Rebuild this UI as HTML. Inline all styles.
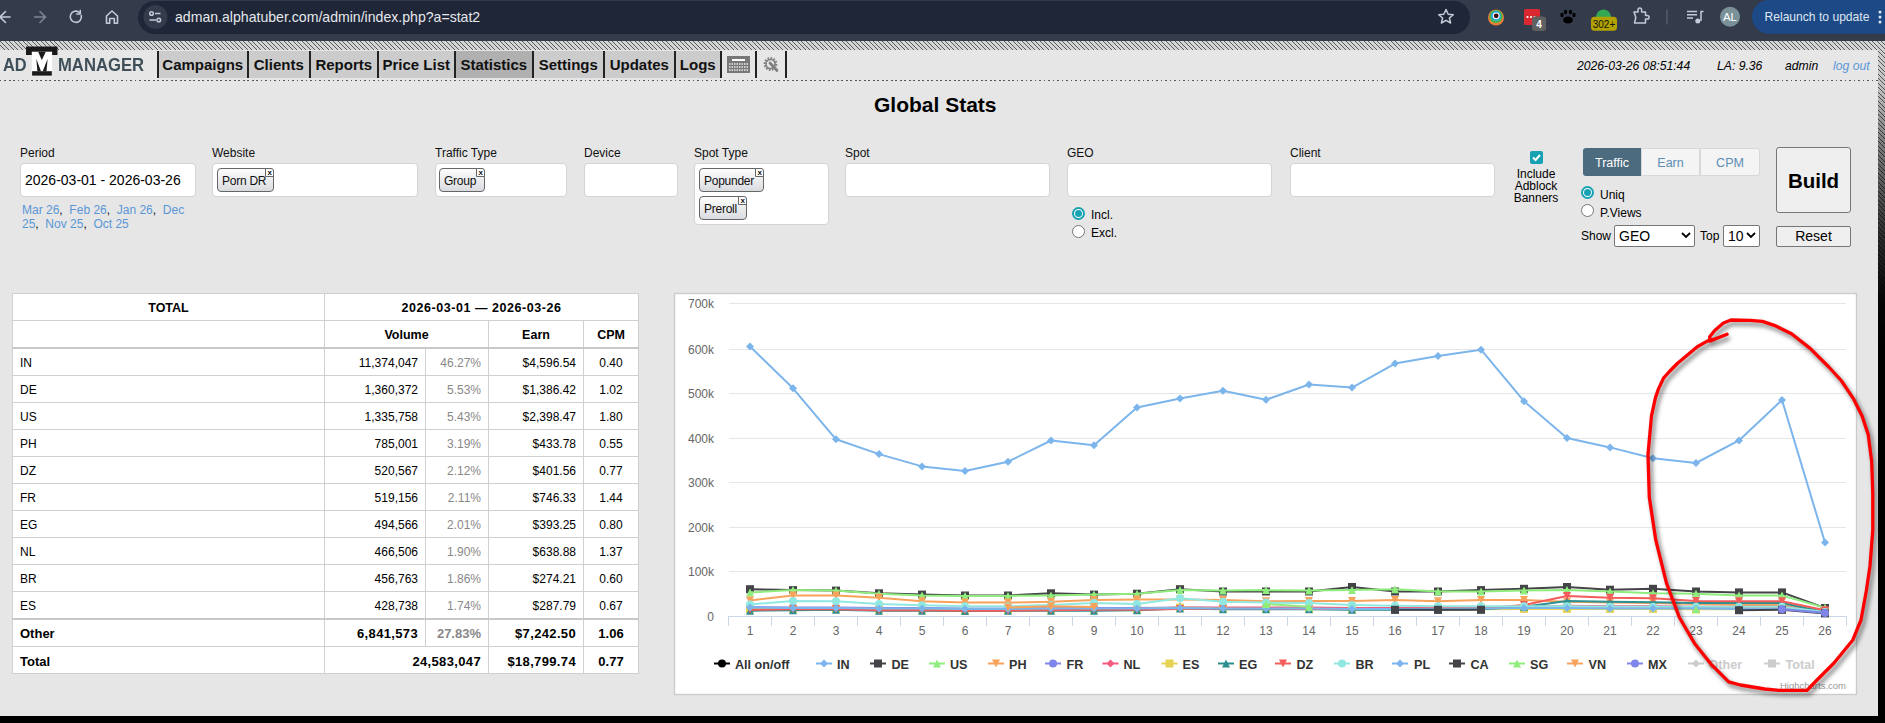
<!DOCTYPE html>
<html><head><meta charset="utf-8">
<style>
*{box-sizing:border-box;margin:0;padding:0}
html,body{width:1885px;height:723px;overflow:hidden;background:#e6e6e6;font-family:"Liberation Sans",sans-serif;color:#000}
.a{position:absolute;white-space:nowrap}
#chrome{position:absolute;left:0;top:0;width:1885px;height:41px;background:#343b4b}
#urlpill{position:absolute;left:138px;top:1px;width:1332px;height:33px;border-radius:17px;background:#1f2638}
#bottom{position:absolute;left:0;top:716px;width:1885px;height:7px;background:#000}
.nav{position:absolute;top:51px;height:27px;background:#cccccc;font-weight:bold;font-size:15px;line-height:27px;text-align:center;color:#111}
.sep{position:absolute;top:51px;width:1.5px;height:27px;background:#222}
#dots{position:absolute;left:0;top:80px;width:1878px;height:1px;background:repeating-linear-gradient(90deg,#555 0 1.5px,transparent 1.5px 4.5px)}
.lbl{position:absolute;font-size:12px;top:146px;color:#111}
.inp{position:absolute;top:163px;height:34px;background:#fff;border:1px solid #d4d4d4;border-radius:4px}
.tag{position:absolute;height:24px;border:1px solid #666;border-radius:4px;background:linear-gradient(#fdfdfd,#d9dcdf);font-size:12px;line-height:24px;padding-left:4px;color:#111;letter-spacing:-0.25px}
.tag i{position:absolute;right:-1px;top:-1px;width:9px;height:9px;border:1px solid #666;border-radius:0 3px 0 0;background:#fff;font-style:normal;font-size:8px;line-height:7px;text-align:center;font-weight:bold}
.link{color:#5a96d6}
.link b{color:#111;font-weight:normal}

#tbl{position:absolute;left:12px;top:293px;border-collapse:collapse;background:#fff;font-size:12px;table-layout:fixed;width:627px}
#tbl th,#tbl td{border:1px solid #d0d0d0;height:27px;padding:2px 7px 0 7px;white-space:nowrap}
#tbl th{font-weight:bold;font-size:12.5px;text-align:center}
#tbl col{}
#tbl .h2 th{border-bottom:2px solid #c8c8c8}
#tbl td.c0{text-align:left}
#tbl td.v,#tbl td.p,#tbl td.e{text-align:right}
#tbl td.p{color:#888}
#tbl td.m{text-align:center}
#tbl tr.b td{font-weight:bold;font-size:13px}
#tbl tr.b td.v,#tbl tr.b td.e{letter-spacing:0.35px}
#tbl tr.oth td{border-top:2px solid #c8c8c8;height:28px}
#tbl tr.first td{height:28px}
</style></head><body>
<div id="chrome">
  <div id="urlpill"></div>
</div>
<!--CHROME-->
<!-- chrome icons -->
<svg class="a" style="left:0;top:0" width="1885" height="41">
 <g stroke="#c5cbd6" stroke-width="1.6" fill="none" stroke-linecap="round" stroke-linejoin="round">
  <path d="M10 17H0.5M5.5 11.5L0 17L5.5 22.5"/>
 </g>
 <g stroke="#7f8697" stroke-width="1.6" fill="none" stroke-linecap="round" stroke-linejoin="round">
  <path d="M34.5 17H45M40 11.5L45.5 17L40 22.5"/>
 </g>
 <g stroke="#c5cbd6" stroke-width="1.6" fill="none" stroke-linecap="round" stroke-linejoin="round">
  <path d="M81.3 15.5A5.6 5.6 0 1 1 79.5 12.5"/>
  <path d="M80.3 10.5V14H76.8"/>
  <path d="M106.5 23.3V16L112 11L117.5 16V23.3H114.3V18.5H109.7V23.3Z"/>
 </g>
 <circle cx="155.5" cy="17" r="12" fill="#343b4b"/>
 <g stroke="#c5cbd6" stroke-width="1.5" fill="none">
  <circle cx="151.5" cy="13.5" r="1.8"/><path d="M155 13.5H160.5"/>
  <circle cx="158.8" cy="20" r="1.8"/><path d="M149.5 20H156"/>
 </g>
 <text x="175" y="22" font-size="14.1" fill="#e6e8ec" font-family="Liberation Sans">adman.alphatuber.com/admin/index.php?a=stat2</text>
 <path d="M1446 9.5L1448.2 14.3L1453.3 14.7L1449.4 18L1450.6 23L1446 20.3L1441.4 23L1442.6 18L1438.7 14.7L1443.8 14.3Z" stroke="#c5cbd6" stroke-width="1.5" fill="none" stroke-linejoin="round"/>
 <!-- colorful circle -->
 <circle cx="1496" cy="17.5" r="8" fill="#f07a3a"/>
 <circle cx="1496" cy="16.5" r="6.6" fill="#4bb543"/>
 <circle cx="1496" cy="16" r="5" fill="#2aa8e0"/>
 <circle cx="1496.2" cy="15.8" r="3.4" fill="#fff"/>
 <circle cx="1496.2" cy="15.8" r="2.4" fill="#3b1212"/>
 <!-- red square with badge -->
 <rect x="1524" y="9" width="16" height="16" rx="1.5" fill="#d9282f"/>
 <circle cx="1527.5" cy="17" r="1.1" fill="#fff"/><circle cx="1531" cy="17" r="1.1" fill="#fff"/><circle cx="1534.5" cy="17" r="1.1" fill="#fff"/>
 <rect x="1532" y="16.5" width="14" height="14.5" rx="3" fill="#5f6062"/>
 <text x="1539" y="28.3" font-size="10" font-weight="bold" fill="#fff" text-anchor="middle" font-family="Liberation Sans">4</text>
 <!-- paw -->
 <g fill="#000">
  <ellipse cx="1568" cy="20" rx="5" ry="3.5"/>
  <ellipse cx="1562" cy="15" rx="1.6" ry="2.2"/>
  <ellipse cx="1565.5" cy="12" rx="1.7" ry="2.3"/>
  <ellipse cx="1570.5" cy="12" rx="1.7" ry="2.3"/>
  <ellipse cx="1574" cy="15" rx="1.6" ry="2.2"/>
 </g>
 <!-- green + badge -->
 <circle cx="1603.5" cy="17" r="7.5" fill="#34a853"/>
 <rect x="1591" y="16.8" width="26" height="14" rx="3.5" fill="#b3a300"/>
 <text x="1604" y="28" font-size="10" fill="#111" text-anchor="middle" font-family="Liberation Sans">302+</text>
 <!-- puzzle -->
 <path d="M1634 12H1638V9.8A1.8 1.8 0 0 1 1641.6 9.8V12H1645.5V15.5H1647.3A1.8 1.8 0 0 1 1647.3 19.1H1645.5V23H1634.5L1635.8 17.5Z" stroke="#c5cbd6" stroke-width="1.5" fill="none" stroke-linejoin="round"/>
 <path d="M1667 9.5V24.5" stroke="#5a6170" stroke-width="1.3"/>
 <!-- media icon -->
 <g stroke="#c5cbd6" stroke-width="1.5" fill="none">
  <path d="M1687 11.5H1697M1687 14.8H1697M1687 18.1H1693"/>
  <path d="M1701 21V11.5H1703.5"/>
 </g>
 <circle cx="1697.8" cy="21" r="2.5" fill="#c5cbd6"/>
 <!-- avatar -->
 <circle cx="1730" cy="16.8" r="10" fill="#7a9198"/>
 <text x="1730" y="21" font-size="11.5" fill="#fff" text-anchor="middle" font-family="Liberation Sans">AL</text>
 <!-- relaunch -->
 <rect x="1752" y="0" width="160" height="33.7" rx="16.8" fill="#1d4a86"/>
 <text x="1764.5" y="21" font-size="12.1" fill="#dfe6f2" font-family="Liberation Sans">Relaunch to update</text>
 <circle cx="1880" cy="12" r="1.5" fill="#dfe6f2"/><circle cx="1880" cy="17" r="1.5" fill="#dfe6f2"/><circle cx="1880" cy="22" r="1.5" fill="#dfe6f2"/>
</svg>
<!-- nav icons -->
<svg class="a" style="left:720px;top:50px" width="70" height="30">
 <rect x="7" y="6" width="23" height="17" fill="#787878"/>
 <rect x="12" y="9" width="13" height="2" fill="#fff"/>
 <g fill="#f0f0f0">
  <rect x="9.5" y="12.5" width="18" height="1.5" opacity="0"/>
 </g>
 <g stroke="#eaeaea" stroke-width="1.3" stroke-dasharray="1.5 1">
  <path d="M9 14H28M9 17H28M9 20H28"/>
 </g>
 <circle cx="50.5" cy="14" r="5.5" stroke="#808080" stroke-width="2.8" fill="none" stroke-dasharray="1.6 1.2"/>
 <circle cx="50.5" cy="14" r="4.5" stroke="#808080" stroke-width="1.6" fill="none"/>
 <path d="M50 13L57 20.5" stroke="#808080" stroke-width="2.8" stroke-linecap="round"/>
</svg>

<!--/CHROME-->
<svg class="a" style="left:0;top:0" width="1885" height="723" shape-rendering="crispEdges">
<defs><pattern id="stp" x="0" y="41" width="9" height="9" patternUnits="userSpaceOnUse"><rect width="9" height="9" fill="#d4d4d4"/><g fill="#5a5a5a"><rect x="0" y="0" width="1" height="1"/><rect x="5" y="0" width="1" height="1"/><rect x="1" y="1" width="1" height="1"/><rect x="6" y="1" width="1" height="1"/><rect x="2" y="2" width="1" height="1"/><rect x="7" y="2" width="1" height="1"/><rect x="3" y="3" width="1" height="1"/><rect x="8" y="3" width="1" height="1"/><rect x="4" y="4" width="1" height="1"/><rect x="0" y="4" width="1" height="1"/><rect x="5" y="5" width="1" height="1"/><rect x="1" y="5" width="1" height="1"/><rect x="6" y="6" width="1" height="1"/><rect x="2" y="6" width="1" height="1"/><rect x="7" y="7" width="1" height="1"/><rect x="3" y="7" width="1" height="1"/><rect x="8" y="8" width="1" height="1"/><rect x="4" y="8" width="1" height="1"/></g></pattern>
<linearGradient id="rg" x1="0" y1="0" x2="0" y2="1"><stop offset="0" stop-color="#000" stop-opacity="0"/><stop offset="0.07" stop-color="#000" stop-opacity="0.1"/><stop offset="0.145" stop-color="#000" stop-opacity="0.4"/><stop offset="0.29" stop-color="#000" stop-opacity="0.8"/><stop offset="0.38" stop-color="#000" stop-opacity="0.97"/><stop offset="0.45" stop-color="#000" stop-opacity="1"/><stop offset="1" stop-color="#000" stop-opacity="1"/></linearGradient></defs>
<rect x="0" y="41" width="1885" height="9" fill="url(#stp)"/>
<rect x="1878" y="41" width="7" height="682" fill="url(#stp)"/>
<rect x="1878" y="41" width="7" height="682" fill="url(#rg)"/>
</svg>

<!-- nav -->
<div class="a" style="left:3px;top:55px;font-size:18px;font-weight:bold;color:#3f4f5a;line-height:20px;transform:scaleX(0.91);transform-origin:0 0">AD</div>
<svg class="a" style="left:26px;top:46px" width="32" height="30">
 <rect x="0" y="0.5" width="31.5" height="8.5" fill="#1a1a1a"/>
 <rect x="5.8" y="5.7" width="20.3" height="19.5" fill="#fff"/>
 <path d="M12.1 5.7H19.8L15.8 14Z" fill="#1a1a1a"/>
 <path d="M10.3 12.8L11.4 25.2H15Z" fill="#1a1a1a"/>
 <path d="M21.6 12.8L20.5 25.2H16.8Z" fill="#1a1a1a"/>
 <rect x="6.1" y="25.2" width="19.7" height="4.4" fill="#1a1a1a"/>
</svg>
<div class="a" style="left:57.5px;top:55px;font-size:18px;font-weight:bold;color:#3f4f5a;line-height:20px;transform:scaleX(0.925);transform-origin:0 0">MANAGER</div>
<div class="sep" style="left:157px"></div>
<div class="nav" style="left:158.5px;width:88.5px">Campaigns</div>
<div class="sep" style="left:247px"></div>
<div class="nav" style="left:248.5px;width:60.5px">Clients</div>
<div class="sep" style="left:309px"></div>
<div class="nav" style="left:310.5px;width:66.5px">Reports</div>
<div class="sep" style="left:377px"></div>
<div class="nav" style="left:378.5px;width:75.5px">Price List</div>
<div class="sep" style="left:454px"></div>
<div class="nav" style="left:455.5px;width:76.5px;background:#b0b0b0">Statistics</div>
<div class="sep" style="left:532px"></div>
<div class="nav" style="left:533.5px;width:69.5px">Settings</div>
<div class="sep" style="left:603px"></div>
<div class="nav" style="left:604.5px;width:69.5px">Updates</div>
<div class="sep" style="left:674px"></div>
<div class="nav" style="left:675.5px;width:44.5px">Logs</div>
<div class="sep" style="left:720px"></div>
<div class="sep" style="left:755px"></div>
<div class="sep" style="left:785px"></div>
<div id="dots"></div>

<div class="a" style="left:1577px;top:59px;font-size:12.2px;font-style:italic">2026-03-26 08:51:44</div>
<div class="a" style="left:1717px;top:59px;font-size:12.2px;font-style:italic">LA: 9.36</div>
<div class="a" style="left:1785px;top:59px;font-size:12.2px;font-style:italic">admin</div>
<div class="a link" style="left:1833px;top:59px;font-size:12.2px;font-style:italic">log out</div>

<!-- title -->
<div class="a" style="left:874px;top:93px;font-size:21px;font-weight:bold">Global Stats</div>

<!-- filters -->
<div class="lbl" style="left:20px">Period</div>
<div class="inp" style="left:20px;width:176px"></div>
<div class="a" style="left:25px;top:172px;font-size:14px">2026-03-01 - 2026-03-26</div>
<div class="a link" style="left:22px;top:203px;font-size:12px;line-height:14px;white-space:normal;width:175px">Mar 26<b>,</b>&nbsp; Feb 26<b>,</b>&nbsp; Jan 26<b>,</b>&nbsp; Dec 25<b>,</b>&nbsp; Nov 25<b>,</b>&nbsp; Oct 25</div>

<div class="lbl" style="left:212px">Website</div>
<div class="inp" style="left:212px;width:206px"></div>
<div class="tag" style="left:217px;top:168px;width:57px">Porn DR<i>x</i></div>

<div class="lbl" style="left:435px">Traffic Type</div>
<div class="inp" style="left:435px;width:132px"></div>
<div class="tag" style="left:439px;top:168px;width:46px">Group<i>x</i></div>

<div class="lbl" style="left:584px">Device</div>
<div class="inp" style="left:584px;width:94px"></div>

<div class="lbl" style="left:694px">Spot Type</div>
<div class="inp" style="left:694px;width:135px;height:62px"></div>
<div class="tag" style="left:699px;top:168px;width:65px">Popunder<i>x</i></div>
<div class="tag" style="left:699px;top:196px;width:48px">Preroll<i>x</i></div>

<div class="lbl" style="left:845px">Spot</div>
<div class="inp" style="left:845px;width:205px"></div>

<div class="lbl" style="left:1067px">GEO</div>
<div class="inp" style="left:1067px;width:205px"></div>

<div class="lbl" style="left:1290px">Client</div>
<div class="inp" style="left:1290px;width:205px"></div>


<!-- right controls -->
<div class="a" style="left:1530px;top:151px;width:13px;height:13px;background:#17a2b3;border-radius:2px"></div>
<svg class="a" style="left:1530px;top:151px" width="13" height="13"><path d="M3 6.5 L5.6 9 L10 4" stroke="#fff" stroke-width="2" fill="none"/></svg>
<div class="a" style="left:1506px;top:168px;width:60px;text-align:center;font-size:12px;line-height:12px;white-space:normal">Include<br>Adblock<br>Banners</div>

<div class="a" style="left:1583px;top:148px;width:58px;height:28px;background:#4d6b7e;border-radius:3px 0 0 3px;color:#fff;font-size:12.5px;line-height:30px;text-align:center">Traffic</div>
<div class="a" style="left:1641px;top:148px;width:59px;height:28px;background:#f4f4f4;border:1px solid #d8d8d8;color:#5b8db5;font-size:12.5px;line-height:28px;text-align:center">Earn</div>
<div class="a" style="left:1700px;top:148px;width:60px;height:28px;background:#f4f4f4;border:1px solid #d8d8d8;border-radius:0 3px 3px 0;color:#5b8db5;font-size:12.5px;line-height:28px;text-align:center">CPM</div>

<div class="a" style="left:1581px;top:186px;width:13px;height:13px;border-radius:50%;border:2px solid #17a2b3;background:#fff"></div>
<div class="a" style="left:1584px;top:189px;width:7px;height:7px;border-radius:50%;background:#17a2b3"></div>
<div class="a" style="left:1600px;top:188px;font-size:12px">Uniq</div>
<div class="a" style="left:1581px;top:204px;width:13px;height:13px;border-radius:50%;border:1px solid #777;background:#fff"></div>
<div class="a" style="left:1600px;top:206px;font-size:12px">P.Views</div>

<div class="a" style="left:1581px;top:229px;font-size:12px">Show</div>
<div class="a" style="left:1614px;top:225px;width:81px;height:22px;background:#fff;border:1px solid #767676;border-radius:2px;font-size:14px;line-height:20px;padding-left:4px">GEO</div>
<svg class="a" style="left:1681px;top:231px" width="10" height="8"><path d="M1 2 L5 6 L9 2" stroke="#000" stroke-width="1.8" fill="none"/></svg>
<div class="a" style="left:1700px;top:229px;font-size:12px">Top</div>
<div class="a" style="left:1723px;top:225px;width:37px;height:22px;background:#fff;border:1px solid #767676;border-radius:2px;font-size:14px;line-height:20px;padding-left:4px">10</div>
<svg class="a" style="left:1746px;top:231px" width="10" height="8"><path d="M1 2 L5 6 L9 2" stroke="#000" stroke-width="1.8" fill="none"/></svg>

<div class="a" style="left:1776px;top:147px;width:75px;height:66px;background:#efefef;border:1px solid #767676;border-radius:3px;font-size:20.5px;font-weight:bold;line-height:65px;text-align:center">Build</div>
<div class="a" style="left:1776px;top:226px;width:75px;height:21px;background:#efefef;border:1px solid #767676;border-radius:2px;font-size:14px;line-height:19px;text-align:center">Reset</div>

<div class="a" style="left:1072px;top:207px;width:13px;height:13px;border-radius:50%;border:2px solid #17a2b3;background:#fff"></div>
<div class="a" style="left:1075px;top:210px;width:7px;height:7px;border-radius:50%;background:#17a2b3"></div>
<div class="a" style="left:1091px;top:208px;font-size:12px">Incl.</div>
<div class="a" style="left:1072px;top:225px;width:13px;height:13px;border-radius:50%;border:1px solid #777;background:#fff"></div>
<div class="a" style="left:1091px;top:226px;font-size:12px">Excl.</div>

<!-- table -->
<table id="tbl"><colgroup><col style="width:312px"><col style="width:101px"><col style="width:63px"><col style="width:95px"><col style="width:55px"></colgroup>
<tr class="h1"><th class="c0" rowspan="1">TOTAL</th><th colspan="4" style="letter-spacing:0.55px;padding-top:1px">2026-03-01 &mdash; 2026-03-26</th></tr>
<tr class="h2"><th class="c0"></th><th colspan="2">Volume</th><th>Earn</th><th>CPM</th></tr>
<tr class="d first"><td class="c0">IN</td><td class="v">11,374,047</td><td class="p">46.27%</td><td class="e">$4,596.54</td><td class="m">0.40</td></tr>
<tr class="d"><td class="c0">DE</td><td class="v">1,360,372</td><td class="p">5.53%</td><td class="e">$1,386.42</td><td class="m">1.02</td></tr>
<tr class="d"><td class="c0">US</td><td class="v">1,335,758</td><td class="p">5.43%</td><td class="e">$2,398.47</td><td class="m">1.80</td></tr>
<tr class="d"><td class="c0">PH</td><td class="v">785,001</td><td class="p">3.19%</td><td class="e">$433.78</td><td class="m">0.55</td></tr>
<tr class="d"><td class="c0">DZ</td><td class="v">520,567</td><td class="p">2.12%</td><td class="e">$401.56</td><td class="m">0.77</td></tr>
<tr class="d"><td class="c0">FR</td><td class="v">519,156</td><td class="p">2.11%</td><td class="e">$746.33</td><td class="m">1.44</td></tr>
<tr class="d"><td class="c0">EG</td><td class="v">494,566</td><td class="p">2.01%</td><td class="e">$393.25</td><td class="m">0.80</td></tr>
<tr class="d"><td class="c0">NL</td><td class="v">466,506</td><td class="p">1.90%</td><td class="e">$638.88</td><td class="m">1.37</td></tr>
<tr class="d"><td class="c0">BR</td><td class="v">456,763</td><td class="p">1.86%</td><td class="e">$274.21</td><td class="m">0.60</td></tr>
<tr class="d"><td class="c0">ES</td><td class="v">428,738</td><td class="p">1.74%</td><td class="e">$287.79</td><td class="m">0.67</td></tr>
<tr class="d b oth"><td class="c0">Other</td><td class="v">6,841,573</td><td class="p">27.83%</td><td class="e">$7,242.50</td><td class="m">1.06</td></tr>
<tr class="d b"><td class="c0">Total</td><td class="v" colspan="2">24,583,047</td><td class="e">$18,799.74</td><td class="m">0.77</td></tr>

</table>
<!--CHART-->
<svg class="a" style="left:0;top:0" width="1885" height="723">
<rect x="674.5" y="293.5" width="1182" height="401" fill="#fff" stroke="#cbcbcb" stroke-width="1.4"/>
<path d="M729 571.5H1846" stroke="#e6e6e6" stroke-width="1"/>
<path d="M729 527.5H1846" stroke="#e6e6e6" stroke-width="1"/>
<path d="M729 482.5H1846" stroke="#e6e6e6" stroke-width="1"/>
<path d="M729 438.5H1846" stroke="#e6e6e6" stroke-width="1"/>
<path d="M729 393.5H1846" stroke="#e6e6e6" stroke-width="1"/>
<path d="M729 349.5H1846" stroke="#e6e6e6" stroke-width="1"/>
<path d="M729 303.5H1846" stroke="#e6e6e6" stroke-width="1"/>
<text x="714" y="621" text-anchor="end" font-size="12" fill="#666">0</text>
<text x="714" y="576" text-anchor="end" font-size="12" fill="#666">100k</text>
<text x="714" y="532" text-anchor="end" font-size="12" fill="#666">200k</text>
<text x="714" y="487" text-anchor="end" font-size="12" fill="#666">300k</text>
<text x="714" y="443" text-anchor="end" font-size="12" fill="#666">400k</text>
<text x="714" y="398" text-anchor="end" font-size="12" fill="#666">500k</text>
<text x="714" y="354" text-anchor="end" font-size="12" fill="#666">600k</text>
<text x="714" y="308" text-anchor="end" font-size="12" fill="#666">700k</text>
<path d="M728 616.5H1847" stroke="#ccd6eb" stroke-width="1"/>
<path d="M728.5 616.5V626" stroke="#ccd6eb" stroke-width="1"/>
<path d="M771.5 616.5V626" stroke="#ccd6eb" stroke-width="1"/>
<path d="M814.5 616.5V626" stroke="#ccd6eb" stroke-width="1"/>
<path d="M857.5 616.5V626" stroke="#ccd6eb" stroke-width="1"/>
<path d="M900.5 616.5V626" stroke="#ccd6eb" stroke-width="1"/>
<path d="M943.5 616.5V626" stroke="#ccd6eb" stroke-width="1"/>
<path d="M986.5 616.5V626" stroke="#ccd6eb" stroke-width="1"/>
<path d="M1029.5 616.5V626" stroke="#ccd6eb" stroke-width="1"/>
<path d="M1072.5 616.5V626" stroke="#ccd6eb" stroke-width="1"/>
<path d="M1115.5 616.5V626" stroke="#ccd6eb" stroke-width="1"/>
<path d="M1158.5 616.5V626" stroke="#ccd6eb" stroke-width="1"/>
<path d="M1201.5 616.5V626" stroke="#ccd6eb" stroke-width="1"/>
<path d="M1244.5 616.5V626" stroke="#ccd6eb" stroke-width="1"/>
<path d="M1287.5 616.5V626" stroke="#ccd6eb" stroke-width="1"/>
<path d="M1330.5 616.5V626" stroke="#ccd6eb" stroke-width="1"/>
<path d="M1373.5 616.5V626" stroke="#ccd6eb" stroke-width="1"/>
<path d="M1416.5 616.5V626" stroke="#ccd6eb" stroke-width="1"/>
<path d="M1459.5 616.5V626" stroke="#ccd6eb" stroke-width="1"/>
<path d="M1502.5 616.5V626" stroke="#ccd6eb" stroke-width="1"/>
<path d="M1545.5 616.5V626" stroke="#ccd6eb" stroke-width="1"/>
<path d="M1588.5 616.5V626" stroke="#ccd6eb" stroke-width="1"/>
<path d="M1631.5 616.5V626" stroke="#ccd6eb" stroke-width="1"/>
<path d="M1674.5 616.5V626" stroke="#ccd6eb" stroke-width="1"/>
<path d="M1717.5 616.5V626" stroke="#ccd6eb" stroke-width="1"/>
<path d="M1760.5 616.5V626" stroke="#ccd6eb" stroke-width="1"/>
<path d="M1803.5 616.5V626" stroke="#ccd6eb" stroke-width="1"/>
<path d="M1846.5 616.5V626" stroke="#ccd6eb" stroke-width="1"/>
<text x="750" y="634.7" text-anchor="middle" font-size="12" fill="#666">1</text>
<text x="793" y="634.7" text-anchor="middle" font-size="12" fill="#666">2</text>
<text x="836" y="634.7" text-anchor="middle" font-size="12" fill="#666">3</text>
<text x="879" y="634.7" text-anchor="middle" font-size="12" fill="#666">4</text>
<text x="922" y="634.7" text-anchor="middle" font-size="12" fill="#666">5</text>
<text x="965" y="634.7" text-anchor="middle" font-size="12" fill="#666">6</text>
<text x="1008" y="634.7" text-anchor="middle" font-size="12" fill="#666">7</text>
<text x="1051" y="634.7" text-anchor="middle" font-size="12" fill="#666">8</text>
<text x="1094" y="634.7" text-anchor="middle" font-size="12" fill="#666">9</text>
<text x="1137" y="634.7" text-anchor="middle" font-size="12" fill="#666">10</text>
<text x="1180" y="634.7" text-anchor="middle" font-size="12" fill="#666">11</text>
<text x="1223" y="634.7" text-anchor="middle" font-size="12" fill="#666">12</text>
<text x="1266" y="634.7" text-anchor="middle" font-size="12" fill="#666">13</text>
<text x="1309" y="634.7" text-anchor="middle" font-size="12" fill="#666">14</text>
<text x="1352" y="634.7" text-anchor="middle" font-size="12" fill="#666">15</text>
<text x="1395" y="634.7" text-anchor="middle" font-size="12" fill="#666">16</text>
<text x="1438" y="634.7" text-anchor="middle" font-size="12" fill="#666">17</text>
<text x="1481" y="634.7" text-anchor="middle" font-size="12" fill="#666">18</text>
<text x="1524" y="634.7" text-anchor="middle" font-size="12" fill="#666">19</text>
<text x="1567" y="634.7" text-anchor="middle" font-size="12" fill="#666">20</text>
<text x="1610" y="634.7" text-anchor="middle" font-size="12" fill="#666">21</text>
<text x="1653" y="634.7" text-anchor="middle" font-size="12" fill="#666">22</text>
<text x="1696" y="634.7" text-anchor="middle" font-size="12" fill="#666">23</text>
<text x="1739" y="634.7" text-anchor="middle" font-size="12" fill="#666">24</text>
<text x="1782" y="634.7" text-anchor="middle" font-size="12" fill="#666">25</text>
<text x="1825" y="634.7" text-anchor="middle" font-size="12" fill="#666">26</text>
<path d="M750 346.5 L793 388.3 L836 439.3 L879 454.1 L922 466.4 L965 471.1 L1008 461.7 L1051 440.5 L1094 445.2 L1137 407.6 L1180 398.4 L1223 390.7 L1266 399.8 L1309 384.5 L1352 387.6 L1395 363.6 L1438 356.1 L1481 349.7 L1524 401.2 L1567 438.1 L1610 447.4 L1653 458.2 L1696 463 L1739 440.4 L1782 400 L1825 542.5" stroke="#7cb5ec" stroke-width="2" fill="none" stroke-linejoin="round" stroke-linecap="round"/>
<path d="M750 342.5L754 346.5L750 350.5L746 346.5Z" fill="#7cb5ec"/>
<path d="M793 384.3L797 388.3L793 392.3L789 388.3Z" fill="#7cb5ec"/>
<path d="M836 435.3L840 439.3L836 443.3L832 439.3Z" fill="#7cb5ec"/>
<path d="M879 450.1L883 454.1L879 458.1L875 454.1Z" fill="#7cb5ec"/>
<path d="M922 462.4L926 466.4L922 470.4L918 466.4Z" fill="#7cb5ec"/>
<path d="M965 467.1L969 471.1L965 475.1L961 471.1Z" fill="#7cb5ec"/>
<path d="M1008 457.7L1012 461.7L1008 465.7L1004 461.7Z" fill="#7cb5ec"/>
<path d="M1051 436.5L1055 440.5L1051 444.5L1047 440.5Z" fill="#7cb5ec"/>
<path d="M1094 441.2L1098 445.2L1094 449.2L1090 445.2Z" fill="#7cb5ec"/>
<path d="M1137 403.6L1141 407.6L1137 411.6L1133 407.6Z" fill="#7cb5ec"/>
<path d="M1180 394.4L1184 398.4L1180 402.4L1176 398.4Z" fill="#7cb5ec"/>
<path d="M1223 386.7L1227 390.7L1223 394.7L1219 390.7Z" fill="#7cb5ec"/>
<path d="M1266 395.8L1270 399.8L1266 403.8L1262 399.8Z" fill="#7cb5ec"/>
<path d="M1309 380.5L1313 384.5L1309 388.5L1305 384.5Z" fill="#7cb5ec"/>
<path d="M1352 383.6L1356 387.6L1352 391.6L1348 387.6Z" fill="#7cb5ec"/>
<path d="M1395 359.6L1399 363.6L1395 367.6L1391 363.6Z" fill="#7cb5ec"/>
<path d="M1438 352.1L1442 356.1L1438 360.1L1434 356.1Z" fill="#7cb5ec"/>
<path d="M1481 345.7L1485 349.7L1481 353.7L1477 349.7Z" fill="#7cb5ec"/>
<path d="M1524 397.2L1528 401.2L1524 405.2L1520 401.2Z" fill="#7cb5ec"/>
<path d="M1567 434.1L1571 438.1L1567 442.1L1563 438.1Z" fill="#7cb5ec"/>
<path d="M1610 443.4L1614 447.4L1610 451.4L1606 447.4Z" fill="#7cb5ec"/>
<path d="M1653 454.2L1657 458.2L1653 462.2L1649 458.2Z" fill="#7cb5ec"/>
<path d="M1696 459L1700 463L1696 467L1692 463Z" fill="#7cb5ec"/>
<path d="M1739 436.4L1743 440.4L1739 444.4L1735 440.4Z" fill="#7cb5ec"/>
<path d="M1782 396L1786 400L1782 404L1778 400Z" fill="#7cb5ec"/>
<path d="M1825 538.5L1829 542.5L1825 546.5L1821 542.5Z" fill="#7cb5ec"/>
<path d="M750 589.2 L793 590.1 L836 590.6 L879 593.3 L922 594.6 L965 595.5 L1008 595.5 L1051 593.3 L1094 594.6 L1137 593.7 L1180 589.2 L1223 591.5 L1266 591.5 L1309 591.5 L1352 587 L1395 591.5 L1438 591.5 L1481 590.1 L1524 588.8 L1567 587 L1610 589.7 L1653 588.8 L1696 591.5 L1739 592.4 L1782 592.4 L1825 608" stroke="#434348" stroke-width="2" fill="none" stroke-linejoin="round" stroke-linecap="round"/>
<rect x="746" y="585.2" width="8" height="8" fill="#434348"/>
<rect x="789" y="586.1" width="8" height="8" fill="#434348"/>
<rect x="832" y="586.6" width="8" height="8" fill="#434348"/>
<rect x="875" y="589.3" width="8" height="8" fill="#434348"/>
<rect x="918" y="590.6" width="8" height="8" fill="#434348"/>
<rect x="961" y="591.5" width="8" height="8" fill="#434348"/>
<rect x="1004" y="591.5" width="8" height="8" fill="#434348"/>
<rect x="1047" y="589.3" width="8" height="8" fill="#434348"/>
<rect x="1090" y="590.6" width="8" height="8" fill="#434348"/>
<rect x="1133" y="589.7" width="8" height="8" fill="#434348"/>
<rect x="1176" y="585.2" width="8" height="8" fill="#434348"/>
<rect x="1219" y="587.5" width="8" height="8" fill="#434348"/>
<rect x="1262" y="587.5" width="8" height="8" fill="#434348"/>
<rect x="1305" y="587.5" width="8" height="8" fill="#434348"/>
<rect x="1348" y="583" width="8" height="8" fill="#434348"/>
<rect x="1391" y="587.5" width="8" height="8" fill="#434348"/>
<rect x="1434" y="587.5" width="8" height="8" fill="#434348"/>
<rect x="1477" y="586.1" width="8" height="8" fill="#434348"/>
<rect x="1520" y="584.8" width="8" height="8" fill="#434348"/>
<rect x="1563" y="583" width="8" height="8" fill="#434348"/>
<rect x="1606" y="585.7" width="8" height="8" fill="#434348"/>
<rect x="1649" y="584.8" width="8" height="8" fill="#434348"/>
<rect x="1692" y="587.5" width="8" height="8" fill="#434348"/>
<rect x="1735" y="588.4" width="8" height="8" fill="#434348"/>
<rect x="1778" y="588.4" width="8" height="8" fill="#434348"/>
<rect x="1821" y="604" width="8" height="8" fill="#434348"/>
<path d="M750 592.4 L793 590.1 L836 590.6 L879 593.7 L922 595.5 L965 595.9 L1008 595.9 L1051 595.5 L1094 594.6 L1137 593.7 L1180 590.1 L1223 590.6 L1266 590.1 L1309 590.6 L1352 590.1 L1395 589.2 L1438 591.5 L1481 591.5 L1524 590.6 L1567 590.1 L1610 591.5 L1653 593.3 L1696 593.7 L1739 595.5 L1782 595.5 L1825 607.6" stroke="#90ed7d" stroke-width="2" fill="none" stroke-linejoin="round" stroke-linecap="round"/>
<path d="M750 588.4L754 596.4L746 596.4Z" fill="#90ed7d"/>
<path d="M793 586.1L797 594.1L789 594.1Z" fill="#90ed7d"/>
<path d="M836 586.6L840 594.6L832 594.6Z" fill="#90ed7d"/>
<path d="M879 589.7L883 597.7L875 597.7Z" fill="#90ed7d"/>
<path d="M922 591.5L926 599.5L918 599.5Z" fill="#90ed7d"/>
<path d="M965 591.9L969 599.9L961 599.9Z" fill="#90ed7d"/>
<path d="M1008 591.9L1012 599.9L1004 599.9Z" fill="#90ed7d"/>
<path d="M1051 591.5L1055 599.5L1047 599.5Z" fill="#90ed7d"/>
<path d="M1094 590.6L1098 598.6L1090 598.6Z" fill="#90ed7d"/>
<path d="M1137 589.7L1141 597.7L1133 597.7Z" fill="#90ed7d"/>
<path d="M1180 586.1L1184 594.1L1176 594.1Z" fill="#90ed7d"/>
<path d="M1223 586.6L1227 594.6L1219 594.6Z" fill="#90ed7d"/>
<path d="M1266 586.1L1270 594.1L1262 594.1Z" fill="#90ed7d"/>
<path d="M1309 586.6L1313 594.6L1305 594.6Z" fill="#90ed7d"/>
<path d="M1352 586.1L1356 594.1L1348 594.1Z" fill="#90ed7d"/>
<path d="M1395 585.2L1399 593.2L1391 593.2Z" fill="#90ed7d"/>
<path d="M1438 587.5L1442 595.5L1434 595.5Z" fill="#90ed7d"/>
<path d="M1481 587.5L1485 595.5L1477 595.5Z" fill="#90ed7d"/>
<path d="M1524 586.6L1528 594.6L1520 594.6Z" fill="#90ed7d"/>
<path d="M1567 586.1L1571 594.1L1563 594.1Z" fill="#90ed7d"/>
<path d="M1610 587.5L1614 595.5L1606 595.5Z" fill="#90ed7d"/>
<path d="M1653 589.3L1657 597.3L1649 597.3Z" fill="#90ed7d"/>
<path d="M1696 589.7L1700 597.7L1692 597.7Z" fill="#90ed7d"/>
<path d="M1739 591.5L1743 599.5L1735 599.5Z" fill="#90ed7d"/>
<path d="M1782 591.5L1786 599.5L1778 599.5Z" fill="#90ed7d"/>
<path d="M1825 603.6L1829 611.6L1821 611.6Z" fill="#90ed7d"/>
<path d="M750 600.4 L793 595.5 L836 595.5 L879 597.7 L922 601.3 L965 602.6 L1008 602.6 L1051 601.7 L1094 600 L1137 599.5 L1180 599.5 L1223 600 L1266 601.3 L1309 600.9 L1352 600.9 L1395 600 L1438 601.3 L1481 600 L1524 600 L1567 601.7 L1610 602.6 L1653 603.1 L1696 604 L1739 604.9 L1782 604.9 L1825 611.1" stroke="#f7a35c" stroke-width="2" fill="none" stroke-linejoin="round" stroke-linecap="round"/>
<path d="M746 596.4L754 596.4L750 604.4Z" fill="#f7a35c"/>
<path d="M789 591.5L797 591.5L793 599.5Z" fill="#f7a35c"/>
<path d="M832 591.5L840 591.5L836 599.5Z" fill="#f7a35c"/>
<path d="M875 593.7L883 593.7L879 601.7Z" fill="#f7a35c"/>
<path d="M918 597.3L926 597.3L922 605.3Z" fill="#f7a35c"/>
<path d="M961 598.6L969 598.6L965 606.6Z" fill="#f7a35c"/>
<path d="M1004 598.6L1012 598.6L1008 606.6Z" fill="#f7a35c"/>
<path d="M1047 597.7L1055 597.7L1051 605.7Z" fill="#f7a35c"/>
<path d="M1090 596L1098 596L1094 604Z" fill="#f7a35c"/>
<path d="M1133 595.5L1141 595.5L1137 603.5Z" fill="#f7a35c"/>
<path d="M1176 595.5L1184 595.5L1180 603.5Z" fill="#f7a35c"/>
<path d="M1219 596L1227 596L1223 604Z" fill="#f7a35c"/>
<path d="M1262 597.3L1270 597.3L1266 605.3Z" fill="#f7a35c"/>
<path d="M1305 596.9L1313 596.9L1309 604.9Z" fill="#f7a35c"/>
<path d="M1348 596.9L1356 596.9L1352 604.9Z" fill="#f7a35c"/>
<path d="M1391 596L1399 596L1395 604Z" fill="#f7a35c"/>
<path d="M1434 597.3L1442 597.3L1438 605.3Z" fill="#f7a35c"/>
<path d="M1477 596L1485 596L1481 604Z" fill="#f7a35c"/>
<path d="M1520 596L1528 596L1524 604Z" fill="#f7a35c"/>
<path d="M1563 597.7L1571 597.7L1567 605.7Z" fill="#f7a35c"/>
<path d="M1606 598.6L1614 598.6L1610 606.6Z" fill="#f7a35c"/>
<path d="M1649 599.1L1657 599.1L1653 607.1Z" fill="#f7a35c"/>
<path d="M1692 600L1700 600L1696 608Z" fill="#f7a35c"/>
<path d="M1735 600.9L1743 600.9L1739 608.9Z" fill="#f7a35c"/>
<path d="M1778 600.9L1786 600.9L1782 608.9Z" fill="#f7a35c"/>
<path d="M1821 607.1L1829 607.1L1825 615.1Z" fill="#f7a35c"/>
<path d="M750 607.1 L793 607.6 L836 607.6 L879 608 L922 608 L965 608.5 L1008 608.5 L1051 608 L1094 608 L1137 608 L1180 607.6 L1223 608 L1266 608 L1309 608 L1352 608.5 L1395 608.5 L1438 608.5 L1481 608 L1524 607.1 L1567 606.2 L1610 606.7 L1653 606.7 L1696 607.1 L1739 607.1 L1782 607.1 L1825 612.9" stroke="#8085e9" stroke-width="2" fill="none" stroke-linejoin="round" stroke-linecap="round"/>
<circle cx="750" cy="607.1" r="4" fill="#8085e9"/>
<circle cx="793" cy="607.6" r="4" fill="#8085e9"/>
<circle cx="836" cy="607.6" r="4" fill="#8085e9"/>
<circle cx="879" cy="608" r="4" fill="#8085e9"/>
<circle cx="922" cy="608" r="4" fill="#8085e9"/>
<circle cx="965" cy="608.5" r="4" fill="#8085e9"/>
<circle cx="1008" cy="608.5" r="4" fill="#8085e9"/>
<circle cx="1051" cy="608" r="4" fill="#8085e9"/>
<circle cx="1094" cy="608" r="4" fill="#8085e9"/>
<circle cx="1137" cy="608" r="4" fill="#8085e9"/>
<circle cx="1180" cy="607.6" r="4" fill="#8085e9"/>
<circle cx="1223" cy="608" r="4" fill="#8085e9"/>
<circle cx="1266" cy="608" r="4" fill="#8085e9"/>
<circle cx="1309" cy="608" r="4" fill="#8085e9"/>
<circle cx="1352" cy="608.5" r="4" fill="#8085e9"/>
<circle cx="1395" cy="608.5" r="4" fill="#8085e9"/>
<circle cx="1438" cy="608.5" r="4" fill="#8085e9"/>
<circle cx="1481" cy="608" r="4" fill="#8085e9"/>
<circle cx="1524" cy="607.1" r="4" fill="#8085e9"/>
<circle cx="1567" cy="606.2" r="4" fill="#8085e9"/>
<circle cx="1610" cy="606.7" r="4" fill="#8085e9"/>
<circle cx="1653" cy="606.7" r="4" fill="#8085e9"/>
<circle cx="1696" cy="607.1" r="4" fill="#8085e9"/>
<circle cx="1739" cy="607.1" r="4" fill="#8085e9"/>
<circle cx="1782" cy="607.1" r="4" fill="#8085e9"/>
<circle cx="1825" cy="612.9" r="4" fill="#8085e9"/>
<path d="M750 608.5 L793 608.5 L836 608.5 L879 608.9 L922 608.9 L965 609.3 L1008 609.3 L1051 608.9 L1094 608.9 L1137 608.9 L1180 607.6 L1223 607.6 L1266 607.6 L1309 607.6 L1352 608 L1395 608 L1438 608 L1481 608 L1524 607.1 L1567 605.8 L1610 606.2 L1653 606.2 L1696 606.7 L1739 606.7 L1782 606.7 L1825 611.6" stroke="#f15c80" stroke-width="2" fill="none" stroke-linejoin="round" stroke-linecap="round"/>
<path d="M750 604.5L754 608.5L750 612.5L746 608.5Z" fill="#f15c80"/>
<path d="M793 604.5L797 608.5L793 612.5L789 608.5Z" fill="#f15c80"/>
<path d="M836 604.5L840 608.5L836 612.5L832 608.5Z" fill="#f15c80"/>
<path d="M879 604.9L883 608.9L879 612.9L875 608.9Z" fill="#f15c80"/>
<path d="M922 604.9L926 608.9L922 612.9L918 608.9Z" fill="#f15c80"/>
<path d="M965 605.3L969 609.3L965 613.3L961 609.3Z" fill="#f15c80"/>
<path d="M1008 605.3L1012 609.3L1008 613.3L1004 609.3Z" fill="#f15c80"/>
<path d="M1051 604.9L1055 608.9L1051 612.9L1047 608.9Z" fill="#f15c80"/>
<path d="M1094 604.9L1098 608.9L1094 612.9L1090 608.9Z" fill="#f15c80"/>
<path d="M1137 604.9L1141 608.9L1137 612.9L1133 608.9Z" fill="#f15c80"/>
<path d="M1180 603.6L1184 607.6L1180 611.6L1176 607.6Z" fill="#f15c80"/>
<path d="M1223 603.6L1227 607.6L1223 611.6L1219 607.6Z" fill="#f15c80"/>
<path d="M1266 603.6L1270 607.6L1266 611.6L1262 607.6Z" fill="#f15c80"/>
<path d="M1309 603.6L1313 607.6L1309 611.6L1305 607.6Z" fill="#f15c80"/>
<path d="M1352 604L1356 608L1352 612L1348 608Z" fill="#f15c80"/>
<path d="M1395 604L1399 608L1395 612L1391 608Z" fill="#f15c80"/>
<path d="M1438 604L1442 608L1438 612L1434 608Z" fill="#f15c80"/>
<path d="M1481 604L1485 608L1481 612L1477 608Z" fill="#f15c80"/>
<path d="M1524 603.1L1528 607.1L1524 611.1L1520 607.1Z" fill="#f15c80"/>
<path d="M1567 601.8L1571 605.8L1567 609.8L1563 605.8Z" fill="#f15c80"/>
<path d="M1610 602.2L1614 606.2L1610 610.2L1606 606.2Z" fill="#f15c80"/>
<path d="M1653 602.2L1657 606.2L1653 610.2L1649 606.2Z" fill="#f15c80"/>
<path d="M1696 602.7L1700 606.7L1696 610.7L1692 606.7Z" fill="#f15c80"/>
<path d="M1739 602.7L1743 606.7L1739 610.7L1735 606.7Z" fill="#f15c80"/>
<path d="M1782 602.7L1786 606.7L1782 610.7L1778 606.7Z" fill="#f15c80"/>
<path d="M1825 607.6L1829 611.6L1825 615.6L1821 611.6Z" fill="#f15c80"/>
<path d="M750 608.9 L793 608.9 L836 608.9 L879 609.3 L922 609.3 L965 609.8 L1008 609.8 L1051 609.3 L1094 609.3 L1137 609.3 L1180 607.6 L1223 608.5 L1266 608.9 L1309 608.9 L1352 609.3 L1395 609.3 L1438 609.3 L1481 609.3 L1524 608.9 L1567 608.9 L1610 608.9 L1653 608.9 L1696 609.3 L1739 609.3 L1782 609.3 L1825 612.5" stroke="#e4d354" stroke-width="2" fill="none" stroke-linejoin="round" stroke-linecap="round"/>
<rect x="746" y="604.9" width="8" height="8" fill="#e4d354"/>
<rect x="789" y="604.9" width="8" height="8" fill="#e4d354"/>
<rect x="832" y="604.9" width="8" height="8" fill="#e4d354"/>
<rect x="875" y="605.3" width="8" height="8" fill="#e4d354"/>
<rect x="918" y="605.3" width="8" height="8" fill="#e4d354"/>
<rect x="961" y="605.8" width="8" height="8" fill="#e4d354"/>
<rect x="1004" y="605.8" width="8" height="8" fill="#e4d354"/>
<rect x="1047" y="605.3" width="8" height="8" fill="#e4d354"/>
<rect x="1090" y="605.3" width="8" height="8" fill="#e4d354"/>
<rect x="1133" y="605.3" width="8" height="8" fill="#e4d354"/>
<rect x="1176" y="603.6" width="8" height="8" fill="#e4d354"/>
<rect x="1219" y="604.5" width="8" height="8" fill="#e4d354"/>
<rect x="1262" y="604.9" width="8" height="8" fill="#e4d354"/>
<rect x="1305" y="604.9" width="8" height="8" fill="#e4d354"/>
<rect x="1348" y="605.3" width="8" height="8" fill="#e4d354"/>
<rect x="1391" y="605.3" width="8" height="8" fill="#e4d354"/>
<rect x="1434" y="605.3" width="8" height="8" fill="#e4d354"/>
<rect x="1477" y="605.3" width="8" height="8" fill="#e4d354"/>
<rect x="1520" y="604.9" width="8" height="8" fill="#e4d354"/>
<rect x="1563" y="604.9" width="8" height="8" fill="#e4d354"/>
<rect x="1606" y="604.9" width="8" height="8" fill="#e4d354"/>
<rect x="1649" y="604.9" width="8" height="8" fill="#e4d354"/>
<rect x="1692" y="605.3" width="8" height="8" fill="#e4d354"/>
<rect x="1735" y="605.3" width="8" height="8" fill="#e4d354"/>
<rect x="1778" y="605.3" width="8" height="8" fill="#e4d354"/>
<rect x="1821" y="608.5" width="8" height="8" fill="#e4d354"/>
<path d="M750 610.7 L793 610.2 L836 609.8 L879 610.7 L922 610.7 L965 611.1 L1008 610.7 L1051 610.7 L1094 610.7 L1137 610.2 L1180 608.5 L1223 609.3 L1266 609.3 L1309 609.3 L1352 609.8 L1395 609.8 L1438 609.8 L1481 609.3 L1524 606.7 L1567 600.9 L1610 601.7 L1653 602.2 L1696 603.1 L1739 603.1 L1782 603.1 L1825 612" stroke="#2b908f" stroke-width="2" fill="none" stroke-linejoin="round" stroke-linecap="round"/>
<path d="M750 606.7L754 614.7L746 614.7Z" fill="#2b908f"/>
<path d="M793 606.2L797 614.2L789 614.2Z" fill="#2b908f"/>
<path d="M836 605.8L840 613.8L832 613.8Z" fill="#2b908f"/>
<path d="M879 606.7L883 614.7L875 614.7Z" fill="#2b908f"/>
<path d="M922 606.7L926 614.7L918 614.7Z" fill="#2b908f"/>
<path d="M965 607.1L969 615.1L961 615.1Z" fill="#2b908f"/>
<path d="M1008 606.7L1012 614.7L1004 614.7Z" fill="#2b908f"/>
<path d="M1051 606.7L1055 614.7L1047 614.7Z" fill="#2b908f"/>
<path d="M1094 606.7L1098 614.7L1090 614.7Z" fill="#2b908f"/>
<path d="M1137 606.2L1141 614.2L1133 614.2Z" fill="#2b908f"/>
<path d="M1180 604.5L1184 612.5L1176 612.5Z" fill="#2b908f"/>
<path d="M1223 605.3L1227 613.3L1219 613.3Z" fill="#2b908f"/>
<path d="M1266 605.3L1270 613.3L1262 613.3Z" fill="#2b908f"/>
<path d="M1309 605.3L1313 613.3L1305 613.3Z" fill="#2b908f"/>
<path d="M1352 605.8L1356 613.8L1348 613.8Z" fill="#2b908f"/>
<path d="M1395 605.8L1399 613.8L1391 613.8Z" fill="#2b908f"/>
<path d="M1438 605.8L1442 613.8L1434 613.8Z" fill="#2b908f"/>
<path d="M1481 605.3L1485 613.3L1477 613.3Z" fill="#2b908f"/>
<path d="M1524 602.7L1528 610.7L1520 610.7Z" fill="#2b908f"/>
<path d="M1567 596.9L1571 604.9L1563 604.9Z" fill="#2b908f"/>
<path d="M1610 597.7L1614 605.7L1606 605.7Z" fill="#2b908f"/>
<path d="M1653 598.2L1657 606.2L1649 606.2Z" fill="#2b908f"/>
<path d="M1696 599.1L1700 607.1L1692 607.1Z" fill="#2b908f"/>
<path d="M1739 599.1L1743 607.1L1735 607.1Z" fill="#2b908f"/>
<path d="M1782 599.1L1786 607.1L1778 607.1Z" fill="#2b908f"/>
<path d="M1825 608L1829 616L1821 616Z" fill="#2b908f"/>
<path d="M750 609.8 L793 609.3 L836 609.3 L879 610.2 L922 610.2 L965 610.7 L1008 610.7 L1051 610.2 L1094 609.8 L1137 609.8 L1180 608.9 L1223 608.5 L1266 608.5 L1309 608.9 L1352 608.9 L1395 608.9 L1438 608.9 L1481 608.5 L1524 604.9 L1567 595.9 L1610 597.7 L1653 598.2 L1696 600.9 L1739 601.3 L1782 601.3 L1825 610.2" stroke="#f45b5b" stroke-width="2" fill="none" stroke-linejoin="round" stroke-linecap="round"/>
<path d="M746 605.8L754 605.8L750 613.8Z" fill="#f45b5b"/>
<path d="M789 605.3L797 605.3L793 613.3Z" fill="#f45b5b"/>
<path d="M832 605.3L840 605.3L836 613.3Z" fill="#f45b5b"/>
<path d="M875 606.2L883 606.2L879 614.2Z" fill="#f45b5b"/>
<path d="M918 606.2L926 606.2L922 614.2Z" fill="#f45b5b"/>
<path d="M961 606.7L969 606.7L965 614.7Z" fill="#f45b5b"/>
<path d="M1004 606.7L1012 606.7L1008 614.7Z" fill="#f45b5b"/>
<path d="M1047 606.2L1055 606.2L1051 614.2Z" fill="#f45b5b"/>
<path d="M1090 605.8L1098 605.8L1094 613.8Z" fill="#f45b5b"/>
<path d="M1133 605.8L1141 605.8L1137 613.8Z" fill="#f45b5b"/>
<path d="M1176 604.9L1184 604.9L1180 612.9Z" fill="#f45b5b"/>
<path d="M1219 604.5L1227 604.5L1223 612.5Z" fill="#f45b5b"/>
<path d="M1262 604.5L1270 604.5L1266 612.5Z" fill="#f45b5b"/>
<path d="M1305 604.9L1313 604.9L1309 612.9Z" fill="#f45b5b"/>
<path d="M1348 604.9L1356 604.9L1352 612.9Z" fill="#f45b5b"/>
<path d="M1391 604.9L1399 604.9L1395 612.9Z" fill="#f45b5b"/>
<path d="M1434 604.9L1442 604.9L1438 612.9Z" fill="#f45b5b"/>
<path d="M1477 604.5L1485 604.5L1481 612.5Z" fill="#f45b5b"/>
<path d="M1520 600.9L1528 600.9L1524 608.9Z" fill="#f45b5b"/>
<path d="M1563 591.9L1571 591.9L1567 599.9Z" fill="#f45b5b"/>
<path d="M1606 593.7L1614 593.7L1610 601.7Z" fill="#f45b5b"/>
<path d="M1649 594.2L1657 594.2L1653 602.2Z" fill="#f45b5b"/>
<path d="M1692 596.9L1700 596.9L1696 604.9Z" fill="#f45b5b"/>
<path d="M1735 597.3L1743 597.3L1739 605.3Z" fill="#f45b5b"/>
<path d="M1778 597.3L1786 597.3L1782 605.3Z" fill="#f45b5b"/>
<path d="M1821 606.2L1829 606.2L1825 614.2Z" fill="#f45b5b"/>
<path d="M750 604.4 L793 600.9 L836 601.3 L879 604 L922 605.3 L965 606.2 L1008 606.2 L1051 604.9 L1094 603.1 L1137 604 L1180 598.2 L1223 601.7 L1266 602.6 L1309 603.1 L1352 604.9 L1395 605.8 L1438 606.2 L1481 606.2 L1524 606.2 L1567 606.2 L1610 606.7 L1653 606.7 L1696 606.7 L1739 606.7 L1782 606.7 L1825 612" stroke="#91e8e1" stroke-width="2" fill="none" stroke-linejoin="round" stroke-linecap="round"/>
<circle cx="750" cy="604.4" r="4" fill="#91e8e1"/>
<circle cx="793" cy="600.9" r="4" fill="#91e8e1"/>
<circle cx="836" cy="601.3" r="4" fill="#91e8e1"/>
<circle cx="879" cy="604" r="4" fill="#91e8e1"/>
<circle cx="922" cy="605.3" r="4" fill="#91e8e1"/>
<circle cx="965" cy="606.2" r="4" fill="#91e8e1"/>
<circle cx="1008" cy="606.2" r="4" fill="#91e8e1"/>
<circle cx="1051" cy="604.9" r="4" fill="#91e8e1"/>
<circle cx="1094" cy="603.1" r="4" fill="#91e8e1"/>
<circle cx="1137" cy="604" r="4" fill="#91e8e1"/>
<circle cx="1180" cy="598.2" r="4" fill="#91e8e1"/>
<circle cx="1223" cy="601.7" r="4" fill="#91e8e1"/>
<circle cx="1266" cy="602.6" r="4" fill="#91e8e1"/>
<circle cx="1309" cy="603.1" r="4" fill="#91e8e1"/>
<circle cx="1352" cy="604.9" r="4" fill="#91e8e1"/>
<circle cx="1395" cy="605.8" r="4" fill="#91e8e1"/>
<circle cx="1438" cy="606.2" r="4" fill="#91e8e1"/>
<circle cx="1481" cy="606.2" r="4" fill="#91e8e1"/>
<circle cx="1524" cy="606.2" r="4" fill="#91e8e1"/>
<circle cx="1567" cy="606.2" r="4" fill="#91e8e1"/>
<circle cx="1610" cy="606.7" r="4" fill="#91e8e1"/>
<circle cx="1653" cy="606.7" r="4" fill="#91e8e1"/>
<circle cx="1696" cy="606.7" r="4" fill="#91e8e1"/>
<circle cx="1739" cy="606.7" r="4" fill="#91e8e1"/>
<circle cx="1782" cy="606.7" r="4" fill="#91e8e1"/>
<circle cx="1825" cy="612" r="4" fill="#91e8e1"/>
<path d="M750 607.6 L793 608 L836 608 L879 608.5 L922 608.5 L965 608.9 L1008 608.9 L1051 608.5 L1094 608.5 L1137 608.5 L1180 608 L1223 608.5 L1266 608.5 L1309 608.5 L1352 608.9 L1395 608.9 L1438 608.9 L1481 608.5 L1524 608 L1567 608 L1610 608.5 L1653 608.5 L1696 608.5 L1739 608.9 L1782 608.9 L1825 612.5" stroke="#7cb5ec" stroke-width="2" fill="none" stroke-linejoin="round" stroke-linecap="round"/>
<path d="M750 603.6L754 607.6L750 611.6L746 607.6Z" fill="#7cb5ec"/>
<path d="M793 604L797 608L793 612L789 608Z" fill="#7cb5ec"/>
<path d="M836 604L840 608L836 612L832 608Z" fill="#7cb5ec"/>
<path d="M879 604.5L883 608.5L879 612.5L875 608.5Z" fill="#7cb5ec"/>
<path d="M922 604.5L926 608.5L922 612.5L918 608.5Z" fill="#7cb5ec"/>
<path d="M965 604.9L969 608.9L965 612.9L961 608.9Z" fill="#7cb5ec"/>
<path d="M1008 604.9L1012 608.9L1008 612.9L1004 608.9Z" fill="#7cb5ec"/>
<path d="M1051 604.5L1055 608.5L1051 612.5L1047 608.5Z" fill="#7cb5ec"/>
<path d="M1094 604.5L1098 608.5L1094 612.5L1090 608.5Z" fill="#7cb5ec"/>
<path d="M1137 604.5L1141 608.5L1137 612.5L1133 608.5Z" fill="#7cb5ec"/>
<path d="M1180 604L1184 608L1180 612L1176 608Z" fill="#7cb5ec"/>
<path d="M1223 604.5L1227 608.5L1223 612.5L1219 608.5Z" fill="#7cb5ec"/>
<path d="M1266 604.5L1270 608.5L1266 612.5L1262 608.5Z" fill="#7cb5ec"/>
<path d="M1309 604.5L1313 608.5L1309 612.5L1305 608.5Z" fill="#7cb5ec"/>
<path d="M1352 604.9L1356 608.9L1352 612.9L1348 608.9Z" fill="#7cb5ec"/>
<path d="M1395 604.9L1399 608.9L1395 612.9L1391 608.9Z" fill="#7cb5ec"/>
<path d="M1438 604.9L1442 608.9L1438 612.9L1434 608.9Z" fill="#7cb5ec"/>
<path d="M1481 604.5L1485 608.5L1481 612.5L1477 608.5Z" fill="#7cb5ec"/>
<path d="M1524 604L1528 608L1524 612L1520 608Z" fill="#7cb5ec"/>
<path d="M1567 604L1571 608L1567 612L1563 608Z" fill="#7cb5ec"/>
<path d="M1610 604.5L1614 608.5L1610 612.5L1606 608.5Z" fill="#7cb5ec"/>
<path d="M1653 604.5L1657 608.5L1653 612.5L1649 608.5Z" fill="#7cb5ec"/>
<path d="M1696 604.5L1700 608.5L1696 612.5L1692 608.5Z" fill="#7cb5ec"/>
<path d="M1739 604.9L1743 608.9L1739 612.9L1735 608.9Z" fill="#7cb5ec"/>
<path d="M1782 604.9L1786 608.9L1782 612.9L1778 608.9Z" fill="#7cb5ec"/>
<path d="M1825 608.5L1829 612.5L1825 616.5L1821 612.5Z" fill="#7cb5ec"/>
<path d="M1395 609.8 L1438 609.8 L1481 609.8" stroke="#434348" stroke-width="2" fill="none" stroke-linejoin="round" stroke-linecap="round"/>
<path d="M1739 610.2 L1782 609.8 L1825 613.4" stroke="#434348" stroke-width="2" fill="none" stroke-linejoin="round" stroke-linecap="round"/>
<rect x="1391" y="605.8" width="8" height="8" fill="#434348"/>
<rect x="1434" y="605.8" width="8" height="8" fill="#434348"/>
<rect x="1477" y="605.8" width="8" height="8" fill="#434348"/>
<rect x="1735" y="606.2" width="8" height="8" fill="#434348"/>
<rect x="1778" y="605.8" width="8" height="8" fill="#434348"/>
<rect x="1821" y="609.4" width="8" height="8" fill="#434348"/>
<path d="M1266 604 L1309 606.7" stroke="#90ed7d" stroke-width="2" fill="none" stroke-linejoin="round" stroke-linecap="round"/>
<path d="M1266 600L1270 608L1262 608Z" fill="#90ed7d"/>
<path d="M1309 602.7L1313 610.7L1305 610.7Z" fill="#90ed7d"/>
<path d="M1696 605.3L1700 613.3L1692 613.3Z" fill="#90ed7d"/>
<path d="M1008 607.6 L1051 606.2 L1094 607.1" stroke="#f7a35c" stroke-width="2" fill="none" stroke-linejoin="round" stroke-linecap="round"/>
<path d="M1004 603.6L1012 603.6L1008 611.6Z" fill="#f7a35c"/>
<path d="M1047 602.2L1055 602.2L1051 610.2Z" fill="#f7a35c"/>
<path d="M1090 603.1L1098 603.1L1094 611.1Z" fill="#f7a35c"/>
<path d="M1782 609.3 L1825 612.9" stroke="#8085e9" stroke-width="2" fill="none" stroke-linejoin="round" stroke-linecap="round"/>
<circle cx="1782" cy="609.3" r="4" fill="#8085e9"/>
<circle cx="1825" cy="612.9" r="4" fill="#8085e9"/>
<path d="M714 663.5H730" stroke="#000" stroke-width="2"/>
<circle cx="722" cy="663.5" r="4" fill="#000"/>
<text x="735" y="668.5" font-size="12.6" font-weight="bold" fill="#333333">All on/off</text>
<path d="M816 663.5H832" stroke="#7cb5ec" stroke-width="2"/>
<path d="M824 659.5L828 663.5L824 667.5L820 663.5Z" fill="#7cb5ec"/>
<text x="837" y="668.5" font-size="12.6" font-weight="bold" fill="#333333">IN</text>
<path d="M870 663.5H886" stroke="#434348" stroke-width="2"/>
<rect x="874" y="659.5" width="8" height="8" fill="#434348"/>
<text x="891.5" y="668.5" font-size="12.6" font-weight="bold" fill="#333333">DE</text>
<path d="M929 663.5H945" stroke="#90ed7d" stroke-width="2"/>
<path d="M937 659.5L941 667.5L933 667.5Z" fill="#90ed7d"/>
<text x="950" y="668.5" font-size="12.6" font-weight="bold" fill="#333333">US</text>
<path d="M988 663.5H1004" stroke="#f7a35c" stroke-width="2"/>
<path d="M992 659.5L1000 659.5L996 667.5Z" fill="#f7a35c"/>
<text x="1009" y="668.5" font-size="12.6" font-weight="bold" fill="#333333">PH</text>
<path d="M1045 663.5H1061" stroke="#8085e9" stroke-width="2"/>
<circle cx="1053" cy="663.5" r="4" fill="#8085e9"/>
<text x="1066.5" y="668.5" font-size="12.6" font-weight="bold" fill="#333333">FR</text>
<path d="M1102.5 663.5H1118.5" stroke="#f15c80" stroke-width="2"/>
<path d="M1110.5 659.5L1114.5 663.5L1110.5 667.5L1106.5 663.5Z" fill="#f15c80"/>
<text x="1123.5" y="668.5" font-size="12.6" font-weight="bold" fill="#333333">NL</text>
<path d="M1161.5 663.5H1177.5" stroke="#e4d354" stroke-width="2"/>
<rect x="1165.5" y="659.5" width="8" height="8" fill="#e4d354"/>
<text x="1182.5" y="668.5" font-size="12.6" font-weight="bold" fill="#333333">ES</text>
<path d="M1218 663.5H1234" stroke="#2b908f" stroke-width="2"/>
<path d="M1226 659.5L1230 667.5L1222 667.5Z" fill="#2b908f"/>
<text x="1239" y="668.5" font-size="12.6" font-weight="bold" fill="#333333">EG</text>
<path d="M1275 663.5H1291" stroke="#f45b5b" stroke-width="2"/>
<path d="M1279 659.5L1287 659.5L1283 667.5Z" fill="#f45b5b"/>
<text x="1296.5" y="668.5" font-size="12.6" font-weight="bold" fill="#333333">DZ</text>
<path d="M1334 663.5H1350" stroke="#91e8e1" stroke-width="2"/>
<circle cx="1342" cy="663.5" r="4" fill="#91e8e1"/>
<text x="1355.5" y="668.5" font-size="12.6" font-weight="bold" fill="#333333">BR</text>
<path d="M1392 663.5H1408" stroke="#7cb5ec" stroke-width="2"/>
<path d="M1400 659.5L1404 663.5L1400 667.5L1396 663.5Z" fill="#7cb5ec"/>
<text x="1414" y="668.5" font-size="12.6" font-weight="bold" fill="#333333">PL</text>
<path d="M1449 663.5H1465" stroke="#434348" stroke-width="2"/>
<rect x="1453" y="659.5" width="8" height="8" fill="#434348"/>
<text x="1470.5" y="668.5" font-size="12.6" font-weight="bold" fill="#333333">CA</text>
<path d="M1509 663.5H1525" stroke="#90ed7d" stroke-width="2"/>
<path d="M1517 659.5L1521 667.5L1513 667.5Z" fill="#90ed7d"/>
<text x="1530" y="668.5" font-size="12.6" font-weight="bold" fill="#333333">SG</text>
<path d="M1567 663.5H1583" stroke="#f7a35c" stroke-width="2"/>
<path d="M1571 659.5L1579 659.5L1575 667.5Z" fill="#f7a35c"/>
<text x="1588.5" y="668.5" font-size="12.6" font-weight="bold" fill="#333333">VN</text>
<path d="M1627 663.5H1643" stroke="#8085e9" stroke-width="2"/>
<circle cx="1635" cy="663.5" r="4" fill="#8085e9"/>
<text x="1648" y="668.5" font-size="12.6" font-weight="bold" fill="#333333">MX</text>
<path d="M1688 663.5H1704" stroke="#cccccc" stroke-width="2"/>
<path d="M1696 659.5L1700 663.5L1696 667.5L1692 663.5Z" fill="#cccccc"/>
<text x="1708.5" y="668.5" font-size="12.6" font-weight="bold" fill="#cccccc">Other</text>
<path d="M1764 663.5H1780" stroke="#cccccc" stroke-width="2"/>
<rect x="1768" y="659.5" width="8" height="8" fill="#cccccc"/>
<text x="1785.5" y="668.5" font-size="12.6" font-weight="bold" fill="#cccccc">Total</text>
<text x="1846" y="688.5" text-anchor="end" font-size="9.5" fill="#999">Highcharts.com</text>
</svg>
<!--/CHART-->
<!--ELL-->
<svg class="a" style="left:0;top:0" width="1885" height="723">
<defs><filter id="sh" x="-20%" y="-20%" width="140%" height="140%"><feGaussianBlur stdDeviation="2.2"/></filter></defs>
<path d="M1727.1 334.3 L1709.7 341.1 L1709.7 336.8 L1714.7 330.5 L1723.4 323.1 L1730.9 320 L1750 320.4 L1762.4 321.4 L1774.9 325.6 L1791.5 333.8 L1810.1 348.4 L1828.8 367 L1841.2 380.5 L1853.7 399.2 L1862 415.7 L1868.2 434.4 L1871.7 461.6 L1872.8 494 L1872.8 530 L1870 566 L1866.3 591 L1861 620 L1852.8 640 L1834 663 L1816 681 L1807 690.3 L1779 690.3 L1764.7 689 L1740.4 685 L1728.7 681.8 L1711.5 664.7 L1694.4 643.2 L1679.4 617.5 L1666.5 583.1 L1655.8 540.2 L1649.3 497.3 L1648 454.4 L1651.5 415.8 L1655.6 397.1 L1658.7 388.4 L1663.7 377.8 L1669.9 371 L1677.3 363.5 L1689.8 352.9 L1697.3 346.7 L1707.2 341.1 L1712 339.5" transform="translate(2.5,3.5)" stroke="rgba(0,0,0,0.45)" stroke-width="4" fill="none" filter="url(#sh)" stroke-linejoin="round"/>
<path d="M1727.1 334.3 L1709.7 341.1 L1709.7 336.8 L1714.7 330.5 L1723.4 323.1 L1730.9 320 L1750 320.4 L1762.4 321.4 L1774.9 325.6 L1791.5 333.8 L1810.1 348.4 L1828.8 367 L1841.2 380.5 L1853.7 399.2 L1862 415.7 L1868.2 434.4 L1871.7 461.6 L1872.8 494 L1872.8 530 L1870 566 L1866.3 591 L1861 620 L1852.8 640 L1834 663 L1816 681 L1807 690.3 L1779 690.3 L1764.7 689 L1740.4 685 L1728.7 681.8 L1711.5 664.7 L1694.4 643.2 L1679.4 617.5 L1666.5 583.1 L1655.8 540.2 L1649.3 497.3 L1648 454.4 L1651.5 415.8 L1655.6 397.1 L1658.7 388.4 L1663.7 377.8 L1669.9 371 L1677.3 363.5 L1689.8 352.9 L1697.3 346.7 L1707.2 341.1 L1712 339.5" stroke="#ff0000" stroke-width="3.3" fill="none" stroke-linecap="round" stroke-linejoin="round"/>
</svg>
<!--/ELL-->
<div id="bottom"></div>
</body></html>
